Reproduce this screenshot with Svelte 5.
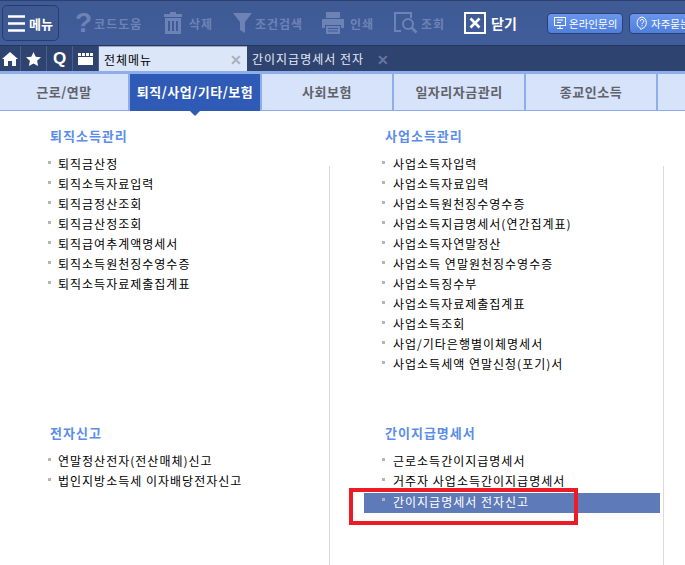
<script lang="ts">
	const navTabs = ["근로/연말", "퇴직/사업/기타/보험", "사회보험", "일자리자금관리", "종교인소득", ""];

	const sections = [
		[
			{
				title: "퇴직소득관리",
				items: [
					"퇴직금산정",
					"퇴직소득자료입력",
					"퇴직금정산조회",
					"퇴직금산정조회",
					"퇴직급여추계액명세서",
					"퇴직소득원천징수영수증",
					"퇴직소득자료제출집계표",
				],
			},
			{
				title: "전자신고",
				items: ["연말정산전자(전산매체)신고", "법인지방소득세 이자배당전자신고"],
			},
		],
		[
			{
				title: "사업소득관리",
				items: [
					"사업소득자입력",
					"사업소득자료입력",
					"사업소득원천징수영수증",
					"사업소득지급명세서(연간집계표)",
					"사업소득자연말정산",
					"사업소득 연말원천징수영수증",
					"사업소득징수부",
					"사업소득자료제출집계표",
					"사업소득조회",
					"사업/기타은행별이체명세서",
					"사업소득세액 연말신청(포기)서",
				],
			},
			{
				title: "간이지급명세서",
				items: ["근로소득간이지급명세서", "거주자 사업소득간이지급명세서", "간이지급명세서 전자신고"],
			},
		],
	];

	const selected = "간이지급명세서 전자신고";
</script>

<div class="page">
	<header class="toolbar">
		<button class="menu-btn">
			<svg width="17" height="17" viewBox="0 0 17 17"><path d="M0 1.500h17M0 8.500h17M0 15.500h17" stroke="#fff" stroke-width="2.600" /></svg>
			<span>메뉴</span>
		</button>

		<div class="tool dim help"><span class="qmark">?</span><span>코드도움</span></div>
		<div class="tool dim trash">
			<svg width="18" height="22" viewBox="0 0 18 22" fill="#6d83b5">
				<path d="M6 0h6v2h6v3H0V2h6zM1 6h16v16H1zM4 9v10h2V9zm4 0v10h2V9zm4 0v10h2V9z" fill-rule="evenodd" />
			</svg>
			<span>삭제</span>
		</div>
		<div class="tool dim filter">
			<svg width="19" height="20" viewBox="0 0 19 20" fill="#6d83b5"><path d="M0 0h19L12 9v11l-5-3V9z" /></svg>
			<span>조건검색</span>
		</div>
		<div class="tool dim print">
			<svg width="22" height="22" viewBox="0 0 22 22" fill="#6d83b5">
				<path d="M4 0h14v6H4zM0 7h22v9h-3v-3H3v3H0z" />
				<path d="M4 14h14v8H4zM6 16v1h10v-1zM6 18.500v1h10v-1z" fill-rule="evenodd" />
			</svg>
			<span>인쇄</span>
		</div>
		<div class="tool dim search">
			<svg width="24" height="22" viewBox="0 0 24 22" fill="none" stroke="#6d83b5" stroke-width="2">
				<path d="M7 19H1V1h16v5" />
				<circle cx="14" cy="12" r="5" />
				<path d="M17.500 15.500l5 5" stroke-width="2.600" />
			</svg>
			<span>조회</span>
		</div>
		<div class="tool close">
			<svg width="22" height="22" viewBox="0 0 22 22" fill="none" stroke="#fff">
				<rect x="1" y="1" width="20" height="20" stroke-width="2" />
				<path d="M6.500 6.500l9 9M15.500 6.500l-9 9" stroke-width="2.600" />
			</svg>
			<span>닫기</span>
		</div>

		<div class="pill-group">
			<button class="pill">
				<svg width="14" height="14" viewBox="0 0 14 14" fill="none" stroke="#fff">
					<rect x="1.500" y="1.500" width="11" height="8" />
					<path d="M4 4h6M4 6.500h4M4 12.500h6M7 10v2" />
				</svg>
				<span>온라인문의</span>
			</button>
			<button class="pill">
				<svg width="14" height="14" viewBox="0 0 14 14" fill="none" stroke="#fff">
					<path d="M7 1a6 6 0 0 1 0 11.500l-1 1v-1A6 6 0 0 1 7 1z" />
					<path d="M5.200 5.200a1.800 1.800 0 1 1 2.600 1.600c-.6.300-.8.700-.8 1.400M7 9.300v1" />
				</svg>
				<span>자주묻는질문</span>
			</button>
		</div>
	</header>

	<div class="tabstrip">
		<div class="quick">
			<button class="quick-btn" aria-label="홈">
				<svg width="16" height="14" viewBox="0 0 16 14" fill="#fff"><path d="M8 0l8 7h-2v7H10V9H6v5H2V7H0z" /></svg>
			</button>
			<button class="quick-btn" aria-label="즐겨찾기">
				<svg width="15" height="14" viewBox="0 0 15 14" fill="#fff"><path d="M7.500 0l2.200 4.700 5.300.6-3.900 3.500 1 5.200-4.600-2.600L2.900 14l1-5.200L0 5.300l5.300-.6z" /></svg>
			</button>
			<button class="quick-btn q">Q</button>
			<button class="quick-btn" aria-label="달력">
				<svg width="15" height="12" viewBox="0 0 15 12" fill="#fff"><path d="M0 4h15v8H0zM0 0h3v3H0zM4 0h3v3H4zM8 0h3v3H8zM12 0h3v3h-3z" /></svg>
			</button>
		</div>
		<div class="doc-tab active">
			<span>전체메뉴</span>
			<span class="x">✕</span>
		</div>
		<div class="doc-tab">
			<span>간이지급명세서 전자</span>
			<span class="x">✕</span>
		</div>
	</div>

	<nav class="nav">
		{#each navTabs as tab}
			<div class="nav-tab" class:on={tab === navTabs[1]}>{tab}</div>
		{/each}
	</nav>

	<main class="content">
		{#each sections as column, i}
			<div class="column" class:right={i === 1}>
				{#each column as section}
					<section class="section">
						<h2>{section.title}</h2>
						<ul>
							{#each section.items as item}
								<li class:selected={item === selected}>{item}</li>
							{/each}
						</ul>
					</section>
				{/each}
			</div>
		{/each}
		<div class="highlight"></div>
	</main>
</div>

<style>
	:global(body) {
		margin: 0;
		background: #fff;
	}

	.page {
		width: 685px;
		height: 565px;
		overflow: hidden;
		font-family: "Noto Sans CJK KR", "Liberation Sans", sans-serif;
		font-size: 12px;
		color: #000;
	}

	button {
		font: inherit;
		padding: 0;
		cursor: pointer;
	}

	.toolbar {
		height: 46px;
		box-sizing: border-box;
		border-top: 1px solid #2c4072;
		border-bottom: 1px solid #263659;
		background: linear-gradient(#3f5a94, #405d9b);
		display: flex;
		align-items: center;
		padding-left: 2px;
		white-space: nowrap;
		overflow: hidden;
	}

	.menu-btn {
		width: 57px;
		height: 36px;
		margin-right: 16px;
		background: #3e5891;
		border: 1px solid #2a3c68;
		border-radius: 5px;
		color: #fff;
		font-weight: 700;
		font-size: 13px;
		display: flex;
		align-items: center;
		justify-content: center;
		gap: 4px;
		flex-shrink: 0;
	}

	.tool {
		display: flex;
		align-items: center;
		font-weight: 700;
		letter-spacing: 1px;
		flex-shrink: 0;
	}

	.dim {
		color: #6d83b5;
	}

	.help {
		width: 89px;
		gap: 2px;
	}

	.qmark {
		font-family: "Liberation Sans", sans-serif;
		font-size: 28px;
		line-height: 30px;
		letter-spacing: 0;
	}

	.trash {
		width: 69px;
		gap: 7px;
	}

	.filter {
		width: 89px;
		gap: 3px;
	}

	.print {
		width: 72px;
		gap: 6px;
	}

	.search {
		width: 70px;
		gap: 3px;
	}

	.close {
		color: #fff;
		font-size: 14px;
		letter-spacing: 0;
		width: 83px;
		gap: 5px;
	}

	.pill-group {
		display: flex;
		gap: 6px;
		flex-shrink: 0;
	}

	.pill {
		height: 21px;
		min-width: 76px;
		box-sizing: border-box;
		display: flex;
		align-items: center;
		gap: 2px;
		padding: 0 4px 0 5px;
		background: linear-gradient(#6a96ec, #4f7edc);
		border: 1px solid #2c4072;
		border-radius: 4px;
		color: #fff;
		font-size: 10.5px;
		flex-shrink: 0;
		white-space: nowrap;
	}

	.pill svg {
		flex-shrink: 0;
	}

	.tabstrip {
		height: 25px;
		background: #2f4370;
		display: flex;
		white-space: nowrap;
	}

	.quick {
		width: 99px;
		display: flex;
		flex-shrink: 0;
	}

	.quick-btn {
		width: 26px;
		height: 25px;
		background: #2f4370;
		border: 0;
		border-right: 1px solid #4c5f8c;
		color: #fff;
		display: flex;
		align-items: center;
		justify-content: center;
	}

	.quick-btn:first-child {
		width: 21px;
	}

	.q {
		font-family: "Liberation Sans", sans-serif;
		font-weight: 700;
		font-size: 17px;
	}

	.doc-tab {
		display: flex;
		align-items: center;
		gap: 13px;
		padding: 0 5px;
		color: #e4e9f5;
		letter-spacing: 1px;
	}

	.doc-tab.active {
		width: 148px;
		box-sizing: border-box;
		justify-content: space-between;
		padding-right: 5px;
		background: #dbe6f8;
		color: #000;
		border-top: 1px solid #9aa9c6;
	}

	.x {
		color: #64779f;
		font-weight: 700;
		font-size: 14px;
		letter-spacing: 0;
	}

	.active .x {
		color: #a9b1bd;
	}

	.nav {
		height: 40px;
		box-sizing: border-box;
		background: #d7e2fb;
		border-top: 3px solid #8fade8;
		border-bottom: 1px solid #8fade8;
		display: grid;
		grid-template-columns: 128px 134px 132px 132px 132px 27px;
	}

	.nav-tab {
		display: flex;
		align-items: center;
		justify-content: center;
		padding-bottom: 2px;
		border-right: 2px solid #8fade8;
		color: #5f6368;
		font-size: 13px;
		font-weight: 700;
		letter-spacing: 0.5px;
		position: relative;
		white-space: nowrap;
	}

	.nav-tab:first-child {
		border-right: 0;
	}

	.nav-tab:last-child {
		border-right: 0;
	}

	.nav-tab.on {
		background: #2f5ab5;
		color: #fff;
		border-left: 2px solid #8fade8;
		border-right: 2px solid #8fade8;
		margin-bottom: -1px;
	}

	/* little arrow under the active tab */
	.nav-tab.on::after {
		content: "";
		position: absolute;
		left: 50%;
		bottom: -5px;
		margin-left: -5px;
		border-left: 5px solid transparent;
		border-right: 5px solid transparent;
		border-top: 5px solid #2f5ab5;
	}

	.content {
		position: relative;
		height: 454px;
		display: grid;
		grid-template-columns: 330px 334px;
	}

	.column {
		position: relative;
		padding-top: 17px;
	}

	.column::after {
		content: "";
		position: absolute;
		top: 55px;
		bottom: 0;
		right: 0;
		width: 1px;
		background: #d9d9d9;
	}

	.section {
		height: 297px;
		box-sizing: border-box;
		padding-left: 50px;
	}

	.right .section {
		padding-left: 55px;
	}

	h2 {
		margin: 0 0 10px;
		font-size: 13px;
		line-height: 16px;
		font-weight: 700;
		letter-spacing: 1px;
		color: #5b8de8;
	}

	ul {
		list-style: none;
		margin: 0;
		padding: 0;
	}

	li {
		position: relative;
		height: 20px;
		line-height: 20px;
		padding-left: 8px;
		letter-spacing: 1px;
		white-space: nowrap;
	}

	li::before {
		content: "";
		position: absolute;
		left: -2px;
		top: 7px;
		width: 3px;
		height: 3px;
		background: #b5b5b5;
	}

	.right li::before {
		left: -3px;
	}

	.right li.selected {
		background: #5f7ab8;
		color: #fff;
		margin-left: -21px;
		padding-left: 29px;
		margin-right: 4px;
		margin-top: 2px;
		line-height: 18px;
	}

	.right li.selected::before {
		left: 18px;
		top: 5px;
	}

	/* red annotation drawn over the screenshot */
	.highlight {
		position: absolute;
		left: 349px;
		top: 377px;
		width: 229px;
		height: 37px;
		box-sizing: border-box;
		border: 4px solid #ed1c24;
		pointer-events: none;
	}
</style>
